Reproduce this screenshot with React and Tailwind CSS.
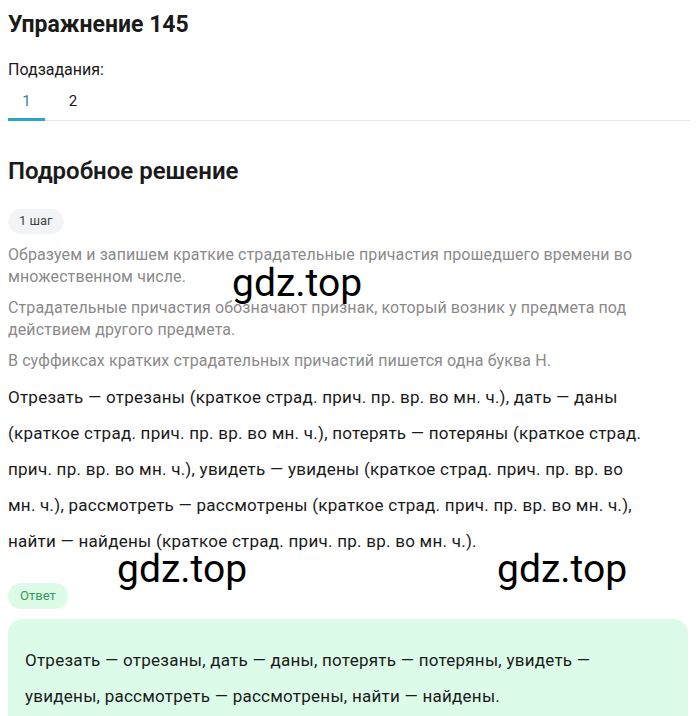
const steps = [
  'Образуем и запишем краткие страдательные причастия прошедшего времени во множественном числе.',
  'Страдательные причастия обозначают признак, который возник у предмета под действием другого предмета.',
  'В суффиксах кратких страдательных причастий пишется одна буква Н.',
];

const solutionLines = [
  'Отрезать — отрезаны (краткое страд. прич. пр. вр. во мн. ч.), дать — даны',
  '(краткое страд. прич. пр. вр. во мн. ч.), потерять — потеряны (краткое страд.',
  'прич. пр. вр. во мн. ч.), увидеть — увидены (краткое страд. прич. пр. вр. во',
  'мн. ч.), рассмотреть — рассмотрены (краткое страд. прич. пр. вр. во мн. ч.),',
  'найти — найдены (краткое страд. прич. пр. вр. во мн. ч.).',
];

const answerLines = [
  'Отрезать — отрезаны, дать — даны, потерять — потеряны, увидеть —',
  'увидены, рассмотреть — рассмотрены, найти — найдены.',
];

const Watermark = ({ className }) => (
  <span className={`absolute text-[39px] leading-none text-black pointer-events-none ${className}`}>gdz.top</span>
);

const App = () => {
  return (
    <div className="relative w-[700px] h-[716px] overflow-hidden bg-white text-[#1a1a1a]" style={{ fontFamily: 'Roboto, "Noto Sans", sans-serif' }}>
      <div className="px-2 pt-[11px]">
        {/* Header */}
        <h1 className="text-[23px] font-bold leading-[28px]">Упражнение 145</h1>
        <p className="mt-[21px] text-[16px] leading-[20px]">Подзадания:</p>

        {/* Tabs */}
        <div className="mt-[10px] flex border-b border-[#e5e7eb] w-[682px]">
          <div className="w-[37px] text-center text-[15px] text-[#3a7ca5] pb-[5px] border-b-[3px] border-[#2aa6c8] -mb-px">1</div>
          <div className="w-[56px] text-center text-[15px] pb-[5px]">2</div>
        </div>

        <h2 className="mt-[35px] text-[24px] font-semibold leading-[30px]">Подробное решение</h2>

        <span className="mt-[23px] inline-flex items-center h-[25px] px-[11px] rounded-full bg-[#f3f4f6] text-[13px] text-[#444]">1 шаг</span>

        <div className="mt-[10px] w-[650px] space-y-[9px] text-[16px] leading-[22px] tracking-[0.1px] text-[#8a8a8a]">
          {steps.map((s, i) => (
            <p key={i}>{s}</p>
          ))}
        </div>

        <p className="mt-[7px] w-[684px] text-[17px] leading-[36px] tracking-[0.25px] text-[#1a1a1a]">
          {solutionLines.map((line, i) => (
            <span key={i} className="block">{line}</span>
          ))}
        </p>

        <span className="mt-[24px] inline-flex items-center h-[26px] px-[12px] rounded-full bg-[#dcfce7] text-[13px] text-[#2f9a5a]">Ответ</span>

        <div className="mt-[10px] w-[680px] rounded-[14px] bg-[#dcfce9] px-[17px] pt-[23px] pb-6">
          <p className="text-[17px] leading-[36px] tracking-[0.25px]">
            {answerLines.map((line, i) => (
              <span key={i} className="block">{line}</span>
            ))}
          </p>
        </div>
      </div>

      <Watermark className="left-[232px] top-[264px]" />
      <Watermark className="left-[117px] top-[550px]" />
      <Watermark className="left-[497px] top-[550px]" />
    </div>
  );
};

export default App;
